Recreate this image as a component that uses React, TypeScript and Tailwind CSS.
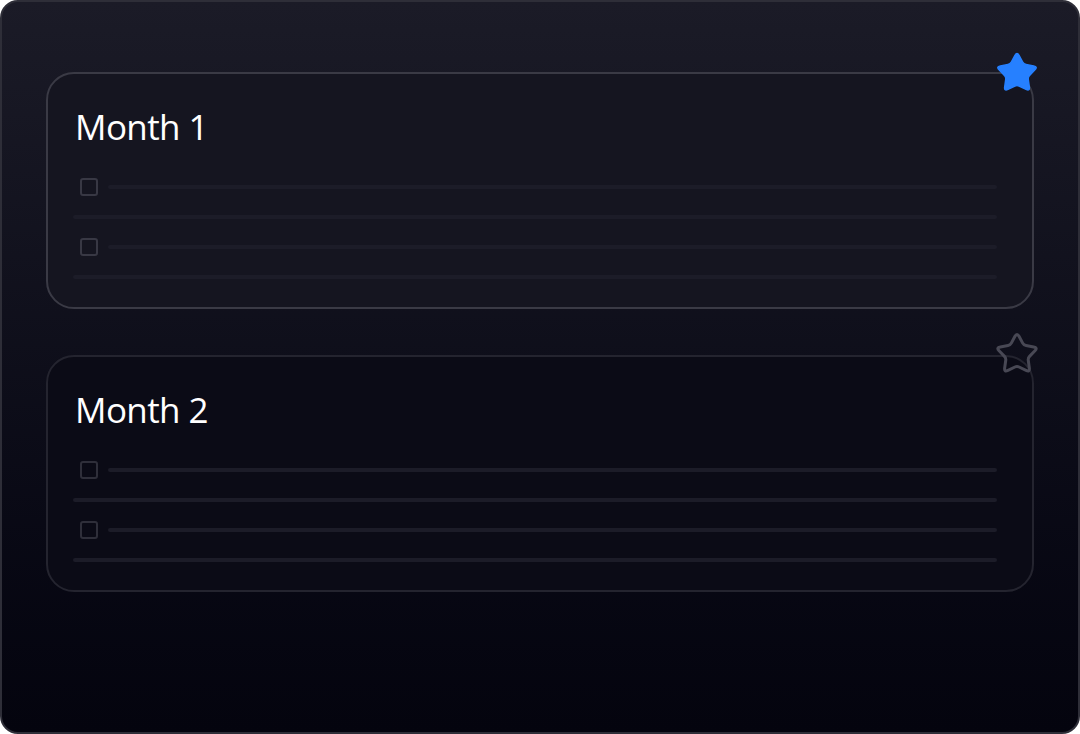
type MonthProps = {
  title: string;
  starred: boolean;
  faded?: boolean;
};

// rounded five-point star, tips softened with quadratic curves
function starPath(cx: number, cy: number, R: number, r: number) {
  const pts: [number, number][] = [];
  for (let i = 0; i < 10; i++) {
    const a = ((-90 + i * 36) * Math.PI) / 180;
    const rad = i % 2 === 0 ? R : r;
    pts.push([cx + rad * Math.cos(a), cy + rad * Math.sin(a)]);
  }
  const lerp = (p: [number, number], q: [number, number], t: number) =>
    [p[0] + (q[0] - p[0]) * t, p[1] + (q[1] - p[1]) * t].map((v) => v.toFixed(2)).join(' ');
  let d = '';
  pts.forEach((p, i) => {
    const prev = pts[(i + 9) % 10];
    const next = pts[(i + 1) % 10];
    const t = i % 2 === 0 ? 0.3 : 0.16;
    d += `${i === 0 ? 'M' : 'L'}${lerp(p, prev, t)} Q${p[0].toFixed(2)} ${p[1].toFixed(2)} ${lerp(p, next, t)} `;
  });
  return d + 'Z';
}

const STAR_D = starPath(24, 25.5, 22, 11.5);

function StarIcon({ filled }: { filled: boolean }) {
  return (
    <svg width="48" height="48" viewBox="0 0 48 48">
      {filled ? (
        <path d={STAR_D} fill="#2680ff" stroke="#2680ff" strokeWidth="1.5" strokeLinejoin="round" />
      ) : (
        <path d={STAR_D} fill="none" stroke="#484854" strokeWidth="3" strokeLinejoin="round" />
      )}
    </svg>
  );
}

function TaskRow({ faded }: { faded?: boolean }) {
  return (
    <div className="flex h-[18px] items-center pl-[7px]">
      <div
        className={`h-[18px] w-[18px] shrink-0 rounded-[3px] border-2 ${
          faded ? 'border-[#2f2f3a]' : 'border-[#383844]'
        }`}
      />
      <div className="ml-[10px] h-[4px] flex-1 rounded-full bg-[#1c1c28]" />
    </div>
  );
}

function Separator() {
  return <div className="h-[4px] rounded-full bg-[#1c1c28]" />;
}

function MonthCard({ title, starred, faded }: MonthProps) {
  return (
    <div className="relative">
      <div
        className={`h-[237px] rounded-[28px] border-2 pl-[25px] pr-[35px] pt-[31px] ${
          faded
            ? 'border-[#24242f] bg-[#0b0b16]'
            : 'border-[#3a3a45] bg-[#151520]'
        }`}
      >
        <h2 className="pl-[2px] text-[35px] leading-[44px] tracking-[-0.6px] text-white [font-family:'Open_Sans',sans-serif]">
          {title}
        </h2>
        <div className="mt-[29px] flex flex-col gap-[19px]">
          <TaskRow faded={faded} />
          <Separator />
          <TaskRow faded={faded} />
          <Separator />
        </div>
      </div>
      <div className={`absolute -right-[7px] ${starred ? '-top-[24px]' : '-top-[26px]'}`}>
        <StarIcon filled={starred} />
      </div>
    </div>
  );
}

export default function App() {
  return (
    <div className="h-[734px] w-[1080px] bg-white">
      <div className="h-full w-full rounded-[18px] border-2 border-[#2e2e38] bg-gradient-to-b from-[#1b1b27] to-[#04040e] px-[44px] pt-[70px]">
        <div className="flex flex-col gap-[46px]">
          <MonthCard title="Month 1" starred />
          <MonthCard title="Month 2" starred={false} faded />
        </div>
      </div>
    </div>
  );
}
